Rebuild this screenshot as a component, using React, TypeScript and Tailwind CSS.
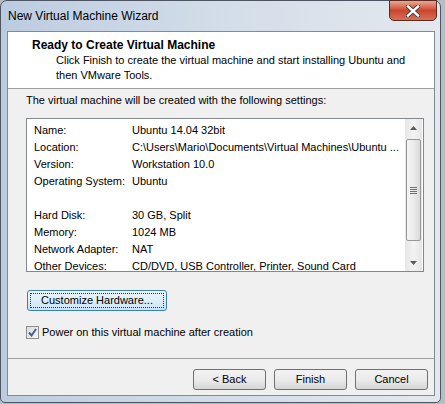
import React from 'react';

const rows: [string, string][] = [
  ['Name:', 'Ubuntu 14.04 32bit'],
  ['Location:', 'C:\\Users\\Mario\\Documents\\Virtual Machines\\Ubuntu ...'],
  ['Version:', 'Workstation 10.0'],
  ['Operating System:', 'Ubuntu'],
  ['', ''],
  ['Hard Disk:', '30 GB, Split'],
  ['Memory:', '1024 MB'],
  ['Network Adapter:', 'NAT'],
  ['Other Devices:', 'CD/DVD, USB Controller, Printer, Sound Card'],
];

function CloseButton() {
  return (
    <div className="-mt-[1px] -mr-[2px] w-[48px] h-[21px] rounded-b-[5px] border border-[#5a2a22] bg-gradient-to-b from-[#e9a895] via-[#c8452d] to-[#d7705a] flex items-center justify-center">
      <svg width="14" height="12" viewBox="0 0 14 12">
        <path d="M2 1.5 L12 10.5 M12 1.5 L2 10.5" stroke="#3a3a3a" strokeWidth="4.2" strokeLinecap="square" />
        <path d="M2 1.5 L12 10.5 M12 1.5 L2 10.5" stroke="#ffffff" strokeWidth="2.4" strokeLinecap="square" />
      </svg>
    </div>
  );
}

function Btn({ label }: { label: string }) {
  return (
    <div className="w-[73px] h-[21px] rounded-[3px] border border-[#707070] bg-gradient-to-b from-[#f2f2f2] via-[#ebebeb] to-[#d6d6d6] flex items-center justify-center text-[#000]">
      {label}
    </div>
  );
}

function Arrow({ up }: { up: boolean }) {
  return (
    <svg width="7" height="4" viewBox="0 0 7 4">
      <path d={up ? 'M0 4 L3.5 0 L7 4 Z' : 'M0 0 L3.5 4 L7 0 Z'} fill="#5a5a5a" />
    </svg>
  );
}

export default function App() {
  return (
    <div className="w-[445px] h-[404px] bg-[#b9bdc3] overflow-hidden font-['Segoe_UI','Liberation_Sans',sans-serif] text-[11px] text-black">
      <div className="w-[441px] h-[403px] rounded-t-[7px] rounded-b-[5px] border border-[#4c5561] bg-gradient-to-r from-[#bccce0] via-[#d3dde9] to-[#e3e8ed] flex flex-col pl-[6px] pr-[5px] pb-[6px]">
        {/* title bar */}
        <div className="h-[30px] flex items-start justify-between">
          <div className="pl-[1px] pt-[7px] leading-[16px] text-[12px] text-[#000]">New Virtual Machine Wizard</div>
          <CloseButton />
        </div>

        {/* client area */}
        <div className="flex-1 flex flex-col border border-[#7f8b98] bg-[#f0f0f0]">
          <div className="h-[57px] bg-white border-b border-[#a0a0a0] pl-[24px] pr-[26px] pt-[5px]">
            <div className="font-bold text-[12px] leading-[16px]">Ready to Create Virtual Machine</div>
            <div className="pl-[24px] leading-[15px]">
              Click Finish to create the virtual machine and start installing Ubuntu and then VMware Tools.
            </div>
          </div>

          <div className="flex-1 flex flex-col pl-[18px]">
            <div className="mt-[3px] leading-[16px]">The virtual machine will be created with the following settings:</div>

            <div className="mt-[10px] w-[398px] h-[154px] border border-[#828790] bg-white flex overflow-hidden">
              <div className="flex-1 pl-[7px] pt-[3px]">
                {rows.map(([k, v], i) => (
                  <div key={i} className="h-[17px] leading-[17px] flex whitespace-nowrap">
                    <div className="w-[98px] shrink-0">{k}</div>
                    <div>{v}</div>
                  </div>
                ))}
              </div>
              <div className="w-[17px] shrink-0 mr-[1px] bg-gradient-to-r from-[#e6e6e6] via-[#f3f3f3] to-[#e6e6e6] flex flex-col">
                <div className="h-[17px] flex items-center justify-center">
                  <Arrow up />
                </div>
                <div className="mt-[3px] mx-[1px] h-[102px] rounded-[2px] border border-[#989898] bg-gradient-to-r from-[#f4f4f4] via-[#ececec] to-[#d9d9d9] flex items-center justify-center">
                  <div className="flex flex-col gap-[1px]">
                    <div className="w-[7px] h-[1px] bg-[#707070]" />
                    <div className="w-[7px] h-[1px] bg-[#707070]" />
                    <div className="w-[7px] h-[1px] bg-[#707070]" />
                    <div className="w-[7px] h-[1px] bg-[#707070]" />
                  </div>
                </div>
                <div className="flex-1" />
                <div className="h-[17px] flex items-center justify-center">
                  <Arrow up={false} />
                </div>
              </div>
            </div>

            <div className="mt-[18px] ml-[1px] w-[140px] h-[21px] rounded-[3px] border border-[#3c7fb1] bg-gradient-to-b from-[#eaf5fb] via-[#dfeef8] to-[#c9e2f3] p-[2px]">
              <div className="w-full h-full border border-dotted border-[#333] flex items-center justify-center">
                Customize Hardware...
              </div>
            </div>

            <div className="mt-[13px] flex items-center gap-[3px]">
              <div className="w-[13px] h-[13px] border border-[#8f8f8f] bg-gradient-to-br from-[#dcdcdc] to-[#f6f6f6] flex items-center justify-center">
                <svg width="9" height="9" viewBox="0 0 9 9">
                  <path d="M1 4.5 L3.5 7.5 L8 1" stroke="#4a5f96" strokeWidth="2" fill="none" />
                </svg>
              </div>
              <div className="leading-[16px]">Power on this virtual machine after creation</div>
            </div>
          </div>

          <div className="h-[37px] border-t border-[#a0a0a0] flex justify-end gap-[8px] pt-[10px] pr-[6px]">
            <Btn label="< Back" />
            <Btn label="Finish" />
            <Btn label="Cancel" />
          </div>
        </div>
      </div>
    </div>
  );
}
